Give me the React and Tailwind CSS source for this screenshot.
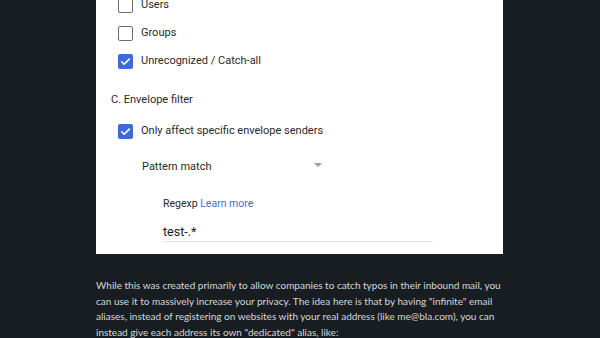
import React from 'react';

const Box = ({ checked }) =>
  checked ? (
    <span className="flex h-[15px] w-[15px] shrink-0 items-center justify-center rounded-[2px] bg-[#3c6bd6]">
      <svg viewBox="0 0 24 24" className="h-[13px] w-[13px]" fill="none" stroke="white" strokeWidth="3" strokeLinecap="round" strokeLinejoin="round">
        <path d="M5 12.5l4.5 4.5L19 7.5" />
      </svg>
    </span>
  ) : (
    <span className="h-[15px] w-[15px] shrink-0 rounded-[2px] border-[1.5px] border-[#6e6e6e] bg-white" />
  );

const Row = ({ checked, label }) => (
  <div className="flex h-[28px] items-center gap-[8px] pl-[22px]">
    <Box checked={checked} />
    <span>{label}</span>
  </div>
);

export default function App() {
  return (
    <div className="h-[338px] w-[600px] overflow-hidden bg-[#181d22]">
      <div className="ml-[96px] w-[407px] bg-white pb-[12px] text-[11px] text-[#2a2a2a] [font-family:Roboto,'Liberation_Sans',sans-serif]">
        <div className="-mt-[9px]">
          <Row label="Users" />
          <Row label="Groups" />
          <Row checked label="Unrecognized / Catch-all" />
        </div>
        <div className="mt-[17px] h-[16px] pl-[15px] text-[11px] leading-[16px]">C. Envelope filter</div>
        <div className="mt-[9px]">
          <Row checked label="Only affect specific envelope senders" />
        </div>
        <div className="mt-[8px] flex h-[28px] w-[226px] items-center justify-between pl-[46px]">
          <span>Pattern match</span>
          <span className="-mt-[5px] h-0 w-0 border-x-[4px] border-t-[4px] border-x-transparent border-t-[#9e9e9e]" />
        </div>
        <div className="mt-[15px] h-[16px] pl-[67px] text-[10.5px] leading-[16px]">
          Regexp <span className="text-[#3f6fd1]">Learn more</span>
        </div>
        <div className="ml-[67px] mt-[11px] h-[19px] w-[270px] border-b border-[#e3e3e3] text-[12.5px] leading-[18px] text-[#1a1a1a]">
          test-.*
        </div>
      </div>
      <p className="ml-[96px] mt-[24px] w-[410px] text-[10px] leading-[15.6px] text-[#d3d8dd] [font-family:Lato,'Open_Sans',sans-serif]">
        While this was created primarily to allow companies to catch typos in their inbound mail, you
        can use it to massively increase your privacy. The idea here is that by having "infinite" email
        aliases, instead of registering on websites with your real address (like me@bla.com), you can
        instead give each address its own "dedicated" alias, like:
      </p>
    </div>
  );
}
